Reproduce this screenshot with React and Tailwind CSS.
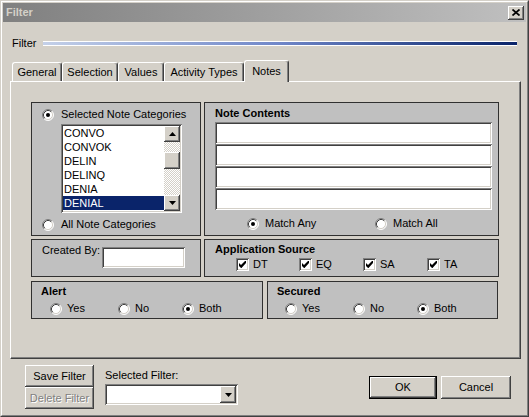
import React from "react";

const raised =
  "shadow-[inset_-1px_-1px_0_#404040,inset_1px_1px_0_#ffffff,inset_-2px_-2px_0_#808080,inset_2px_2px_0_#d4d0c8]";
const sunken =
  "shadow-[inset_1px_1px_0_#808080,inset_-1px_-1px_0_#ffffff,inset_2px_2px_0_#404040,inset_-2px_-2px_0_#d4d0c8]";

function Radio({ checked }) {
  return (
    <svg width="12" height="12" viewBox="0 0 12 12" className="shrink-0">
      <circle cx="6" cy="6" r="5" fill="#fff" />
      <path d="M2.11 9.89A5.5 5.5 0 0 1 9.89 2.11" fill="none" stroke="#808080" />
      <path d="M9.89 2.11A5.5 5.5 0 0 1 2.11 9.89" fill="none" stroke="#fff" />
      <path d="M2.82 9.18A4.5 4.5 0 0 1 9.18 2.82" fill="none" stroke="#404040" />
      <path d="M9.18 2.82A4.5 4.5 0 0 1 2.82 9.18" fill="none" stroke="#d4d0c8" />
      {checked && <circle cx="6" cy="6" r="2" fill="#000" />}
    </svg>
  );
}

function Check() {
  return (
    <div className={`w-[13px] h-[13px] bg-white shrink-0 flex items-center justify-center ${sunken}`}>
      <svg width="7" height="7" viewBox="0 0 7 7">
        <path d="M0 2L2 4L6 0H7V2L2.5 7H2L0 5Z" fill="#000" />
      </svg>
    </div>
  );
}

function Tab({ label, w, selected }) {
  return (
    <div
      className={
        selected
          ? "h-[22px] relative z-10 -mb-px bg-[#d4d0c8] border-t border-l border-white border-r border-r-[#404040] rounded-t-[3px] shadow-[inset_-1px_0_0_#808080] flex items-start pt-[4px] justify-center leading-[13px]"
          : "h-[19px] bg-[#d4d0c8] border-t border-l border-white border-r border-r-[#404040] rounded-t-[3px] shadow-[inset_-1px_0_0_#808080] flex items-start pt-[3px] justify-center leading-[13px]"
      }
      style={{ width: w }}
    >
      {label}
    </div>
  );
}

function Group({ className, children }) {
  return (
    <div className={`bg-[#c0c0c0] border border-[#303030] ${className}`}>{children}</div>
  );
}

function RadioItem({ checked, label, className }) {
  return (
    <div className={`flex items-center gap-[5px] ${className}`}>
      <Radio checked={checked} />
      <span className="leading-[13px]">{label}</span>
    </div>
  );
}

function CheckItem({ label, className }) {
  return (
    <div className={`flex items-center gap-[4px] ${className}`}>
      <Check />
      <span className="leading-[13px]">{label}</span>
    </div>
  );
}

function Field({ className }) {
  return <div className={`bg-white ${sunken} ${className}`} />;
}

const items = ["CONVO", "CONVOK", "DELIN", "DELINQ", "DENIA", "DENIAL"];

export default function App() {
  return (
    <div className="w-[529px] h-[417px] bg-[#d4d0c8] border border-[#d4d0c8] border-r-[#404040] border-b-[#404040] font-['Liberation_Sans',Arial,sans-serif] text-[11px] text-black leading-none overflow-hidden">
      <div className="h-full border border-white border-r-[#808080] border-b-[#808080] p-px flex flex-col">
        {/* Title bar */}
        <div className="h-[19px] shrink-0 flex items-center justify-between pl-[3px] pr-[2px] bg-linear-to-r from-[#808080] to-[#c0c0c0]">
          <span className="font-bold text-[#d4d0c8] leading-[13px]">Filter</span>
          <div className={`w-[16px] h-[14px] bg-[#d4d0c8] flex items-center justify-center ${raised}`}>
            <svg width="8" height="7" viewBox="0 0 8 7">
              <path d="M0.5 0.5L7.5 6.5M7.5 0.5L0.5 6.5" stroke="#000" strokeWidth="1.7" />
            </svg>
          </div>
        </div>

        {/* Filter row */}
        <div className="mt-[16px] h-[10px] flex items-center">
          <span className="w-[40px] pl-[9px] leading-[13px]">Filter</span>
          <div className="w-[474px] h-[5px] border-y border-white bg-linear-to-r from-[#c4d0e8] via-[#6f86c8] to-[#0a246a]" />
        </div>

        {/* Tabs */}
        <div className="mt-[12px] ml-[7px] pl-[2px] h-[21px] flex items-end">
          <Tab label="General" w={50} />
          <Tab label="Selection" w={56} />
          <Tab label="Values" w={46} />
          <Tab label="Activity Types" w={80} />
          <Tab label="Notes" w={45} selected />
        </div>

        {/* Tab panel */}
        <div className="ml-[7px] w-[511px] h-[278px] shrink-0 border border-white border-r-[#404040] border-b-[#404040] shadow-[inset_-1px_-1px_0_#808080] pt-[20px] pl-[20px]">
          {/* Row 1 */}
          <div className="flex gap-[3px]">
            <Group className="w-[170px] h-[134px] flex flex-col">
              <RadioItem checked label="Selected Note Categories" className="ml-[10px] mt-[5px] gap-[7px]" />
              <div className={`ml-[29px] mt-[3px] w-[121px] h-[89px] bg-white p-[2px] flex ${sunken}`}>
                <div className="flex-1 flex flex-col">
                  {items.map((it) => (
                    <div
                      key={it}
                      className={
                        it === "DENIAL"
                          ? "h-[14px] pl-[1px] flex items-center bg-[#0a246a] text-white"
                          : "h-[14px] pl-[1px] flex items-center"
                      }
                    >
                      {it}
                    </div>
                  ))}
                </div>
                <div className="w-[16px] flex flex-col">
                  <div className={`h-[16px] bg-[#d4d0c8] flex items-center justify-center ${raised}`}>
                    <svg width="7" height="4" viewBox="0 0 7 4">
                      <path d="M0 4L3.5 0L7 4Z" fill="#000" />
                    </svg>
                  </div>
                  <div className="flex-1 bg-[repeating-conic-gradient(#d4d0c8_0_25%,#ffffff_0_50%)] bg-[length:2px_2px]">
                    <div className={`mt-[10px] h-[17px] bg-[#d4d0c8] ${raised}`} />
                  </div>
                  <div className={`h-[16px] bg-[#d4d0c8] flex items-center justify-center ${raised}`}>
                    <svg width="7" height="4" viewBox="0 0 7 4">
                      <path d="M0 0L3.5 4L7 0Z" fill="#000" />
                    </svg>
                  </div>
                </div>
              </div>
              <RadioItem label="All Note Categories" className="ml-[10px] mt-[5px] gap-[7px]" />
            </Group>

            <Group className="w-[295px] h-[134px] flex flex-col">
              <div className="pl-[10px] pt-[4px] font-bold leading-[13px]">Note Contents</div>
              <div className="ml-[10px] mt-[2px] w-[277px] flex flex-col">
                <Field className="h-[22px]" />
                <Field className="h-[22px]" />
                <Field className="h-[22px]" />
                <Field className="h-[22px]" />
              </div>
              <div className="mt-[7px] ml-[42px] flex">
                <RadioItem checked label="Match Any" className="w-[128px] gap-[6px]" />
                <RadioItem label="Match All" className="gap-[6px]" />
              </div>
            </Group>
          </div>

          {/* Row 2 */}
          <div className="mt-[3px] flex gap-[3px]">
            <Group className="w-[170px] h-[38px] flex items-start pl-[10px]">
              <span className="w-[60px] pt-[4px] leading-[13px]">Created By:</span>
              <Field className="mt-[7px] w-[83px] h-[21px]" />
            </Group>
            <Group className="w-[295px] h-[38px] flex flex-col">
              <div className="pl-[10px] pt-[3px] font-bold leading-[13px]">Application Source</div>
              <div className="mt-[2px] ml-[31px] flex">
                <CheckItem label="DT" className="w-[63px]" />
                <CheckItem label="EQ" className="w-[64px]" />
                <CheckItem label="SA" className="w-[64px]" />
                <CheckItem label="TA" />
              </div>
            </Group>
          </div>

          {/* Row 3 */}
          <div className="mt-[4px] flex gap-[4px]">
            <Group className="w-[232px] h-[38px] flex flex-col">
              <div className="pl-[9px] pt-[3px] font-bold leading-[13px]">Alert</div>
              <div className="mt-[4px] ml-[18px] flex">
                <RadioItem label="Yes" className="w-[68px]" />
                <RadioItem label="No" className="w-[64px]" />
                <RadioItem checked label="Both" />
              </div>
            </Group>
            <Group className="w-[231px] h-[38px] flex flex-col">
              <div className="pl-[9px] pt-[3px] font-bold leading-[13px]">Secured</div>
              <div className="mt-[4px] ml-[17px] flex">
                <RadioItem label="Yes" className="w-[68px]" />
                <RadioItem label="No" className="w-[64px]" />
                <RadioItem checked label="Both" />
              </div>
            </Group>
          </div>
        </div>

        {/* Bottom buttons */}
        <div className="mt-[6px] flex justify-between pl-[22px] pr-[15px]">
          <div className="flex">
            <div className="flex flex-col">
              <div className={`w-[69px] h-[22px] bg-[#d4d0c8] flex items-center justify-center leading-[13px] ${raised}`}>
                Save Filter
              </div>
              <div className={`w-[69px] h-[22px] bg-[#d4d0c8] flex items-center justify-center leading-[13px] text-[#808080] [text-shadow:1px_1px_0_#ffffff] ${raised}`}>
                Delete Filter
              </div>
            </div>
            <div className="ml-[11px] flex flex-col">
              <span className="pt-[4px] leading-[13px]">Selected Filter:</span>
              <div className={`mt-[2px] w-[133px] h-[21px] bg-white p-[2px] flex justify-end ${sunken}`}>
                <div className={`w-[16px] h-[17px] bg-[#d4d0c8] flex items-center justify-center ${raised}`}>
                  <svg width="7" height="4" viewBox="0 0 7 4">
                    <path d="M0 0L3.5 4L7 0Z" fill="#000" />
                  </svg>
                </div>
              </div>
            </div>
          </div>
          <div className="mt-[11px] flex gap-[4px]">
            <div className="w-[68px] h-[23px] border border-black">
              <div className={`w-full h-full bg-[#d4d0c8] flex items-center justify-center leading-[13px] ${raised}`}>OK</div>
            </div>
            <div className={`w-[70px] h-[23px] bg-[#d4d0c8] flex items-center justify-center leading-[13px] ${raised}`}>
              Cancel
            </div>
          </div>
        </div>
      </div>
    </div>
  );
}
